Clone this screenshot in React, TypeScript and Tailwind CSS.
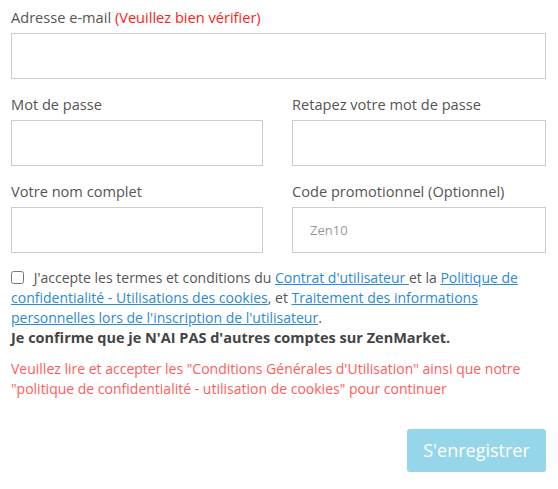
import React from 'react'

// --- Labelled text field ---

function Field({
  label,
  hint,
  placeholder,
  type = 'text',
}: {
  label: string
  hint?: string
  placeholder?: string
  type?: string
}) {
  return (
    <div className="flex flex-col">
      <label className="text-[14.6px] leading-5 text-[#555] mb-1.5 whitespace-nowrap">
        {label}
        {hint && <span className="text-[#ff1a1a]"> {hint}</span>}
      </label>
      <input
        type={type}
        placeholder={placeholder}
        className="h-[46px] w-full border border-[#ccc] bg-white px-[17px] text-[13px] text-[#555] placeholder:text-[#999] outline-none"
      />
    </div>
  )
}

export default function App() {
  return (
    <div
      className="w-[558px] h-[489px] bg-white pl-[11px] pr-[12px] pt-[7px]"
      style={{ fontFamily: '"Open Sans", "Noto Sans", sans-serif' }}
    >
      <Field label="Adresse e-mail" hint="(Veuillez bien vérifier)" type="email" />

      <div className="grid grid-cols-[252px_254px] gap-x-[29px] gap-y-[15px] mt-[15px]">
        <Field label="Mot de passe" type="password" />
        <Field label="Retapez votre mot de passe" type="password" />
        <Field label="Votre nom complet" />
        <Field label="Code promotionnel (Optionnel)" placeholder="Zen10" />
      </div>

      {/* Terms */}
      <div className="mt-[15px] text-[14px] leading-5 text-[#555]">
        <label>
          <input type="checkbox" className="w-[13px] h-[13px] align-[-1px] mr-[6px]" />
          {' '}J'accepte les termes et conditions du{' '}
          <a href="#" className="text-[#2b8ad6] underline">Contrat d'utilisateur </a>
          et la{' '}
          <a href="#" className="text-[#2b8ad6] underline">Politique de confidentialité - Utilisations des cookies</a>
          , et{' '}
          <a href="#" className="text-[#2b8ad6] underline">Traitement des informations personnelles lors de l'inscription de l'utilisateur</a>
          .
        </label>
        <div className="font-bold text-[14.5px] text-[#444]">Je confirme que je N'AI PAS d'autres comptes sur ZenMarket.</div>
      </div>

      <p className="mt-[11px] text-[14px] leading-5 text-[#ff5c5c]">
        Veuillez lire et accepter les "Conditions Générales d'Utilisation" ainsi que notre "politique de confidentialité - utilisation de cookies" pour continuer
      </p>

      <div className="flex justify-end mt-[30px]">
        <button className="w-[139px] h-[43px] rounded-[3px] bg-[#96d6ea] text-white text-[18px]">
          S'enregistrer
        </button>
      </div>
    </div>
  )
}
